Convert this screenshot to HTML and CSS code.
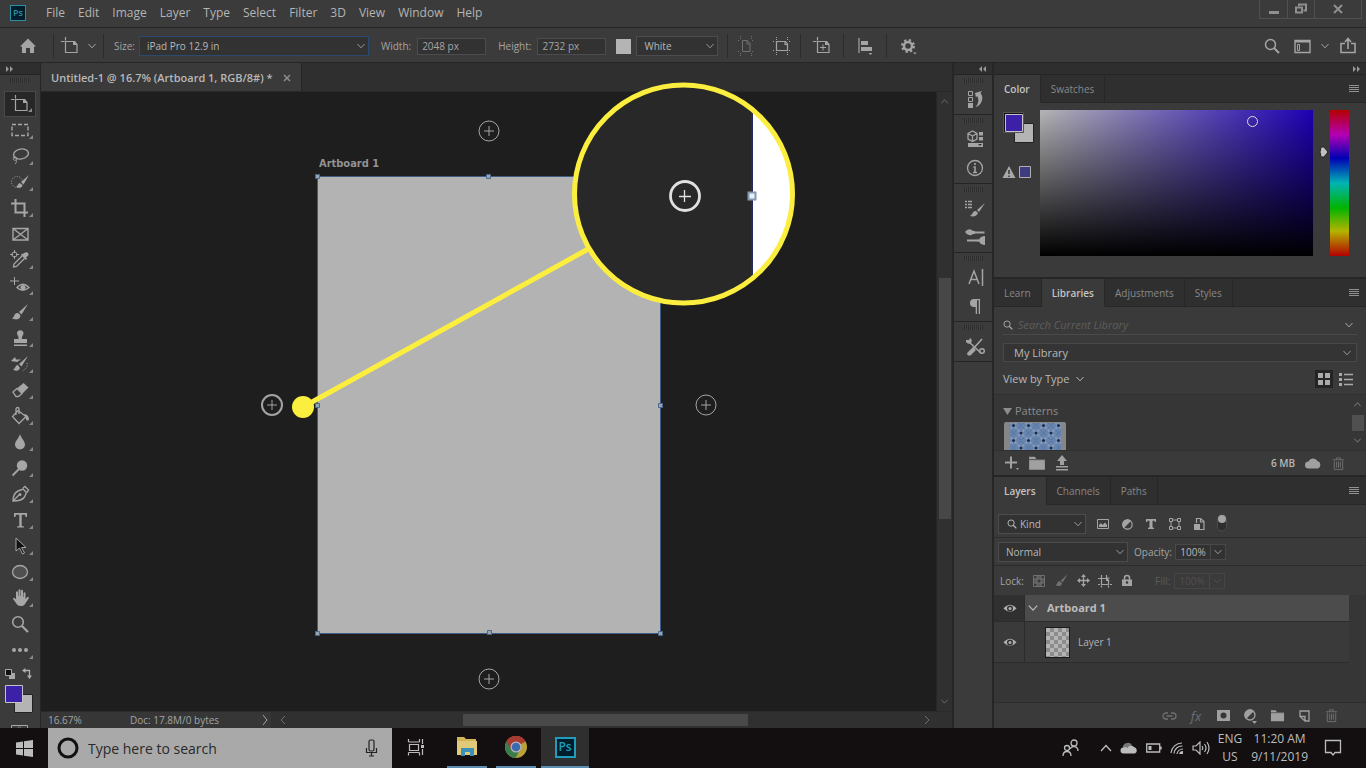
FILE: index.html
```html
<!DOCTYPE html>
<html lang="en">
<head>
<meta charset="utf-8">
<title>Untitled-1 - Photoshop</title>
<link rel="stylesheet" href="styles.css">
</head>
<body>
<svg class="defs" width="0" height="0" aria-hidden="true">
  <symbol id="chev" viewBox="0 0 10 10"><path d="M1.500 3l3.500 3.800L8.500 3" fill="none" stroke="currentColor"/></symbol>
  <symbol id="artb" viewBox="0 0 20 20"><path d="M5.500 5.500h9l2.500 3v8h-11.500zM1 5.500h3.500M5.500 1v3.500" fill="none" stroke="currentColor" stroke-width="1.200"/><path d="M13 5h2l2.500 4H13z" fill="currentColor"/></symbol>
  <symbol id="search" viewBox="0 0 16 16"><circle cx="6.500" cy="6.500" r="5" fill="none" stroke="currentColor" stroke-width="1.500"/><path d="M10 10l5 5" stroke="currentColor" stroke-width="2"/></symbol>
  <symbol id="menu" viewBox="0 0 12 10"><path d="M1 1.500h10M1 3.500h10M1 5.500h10M1 7.500h10" stroke="currentColor"/></symbol>
  <symbol id="brush" viewBox="0 0 20 20"><path d="M18 2L9 10l2.500 2.500zM8 11c-2-.5-3.500 1-4 3-.4 1.500-1.500 2-2.500 2 3 2 7 2 8.500-.5.500-1 .6-2-.2-3z" fill="currentColor"/></symbol>
  <symbol id="folder" viewBox="0 0 16 16"><path d="M1 2.500h5l1.500 2H15v9.500H1z" fill="currentColor"/><path d="M1 5h14" stroke="#383838" stroke-width=".7"/></symbol>
  <symbol id="trash" viewBox="0 0 16 16"><path d="M3.500 5v9.500h9V5M2 4h12M6 4V2h4v2M6 6v6.500M8 6v6.500M10 6v6.500" fill="none" stroke="currentColor"/></symbol>
  <symbol id="half" viewBox="0 0 14 14"><circle cx="7" cy="7" r="5" fill="none" stroke="currentColor" stroke-width="1.300"/><path d="M11 3A5.500 5.500 0 0 0 3 11z" fill="currentColor"/></symbol>
  <symbol id="eye" viewBox="0 0 16 12"><path d="M1.500 6.500Q8-1 14.500 6.500 8 13 1.500 6.500z" fill="currentColor"/><circle cx="8" cy="6.500" r="3" fill="#333"/><circle cx="8" cy="6.500" r="1.500" fill="currentColor"/></symbol>
  <symbol id="cloud" viewBox="0 0 18 12"><path d="M4.500 11.500a3.500 3.500 0 0 1 0-7 5 5 0 0 1 9-.5 4 4 0 0 1 .5 7.500z" fill="currentColor"/></symbol>
  <symbol id="plus" viewBox="0 0 22 22"><circle cx="11" cy="11" r="10" fill="none" stroke="currentColor"/><path d="M6 11h10M11 6v10" stroke="currentColor" stroke-width="1"/></symbol>
</svg>

<header class="menubar">
  <span class="ps small">Ps</span>
  <nav class="menus">
    <button>File</button><button>Edit</button><button>Image</button><button>Layer</button><button>Type</button><button>Select</button><button>Filter</button><button>3D</button><button>View</button><button>Window</button><button>Help</button>
  </nav>
  <div class="winctl">
    <button aria-label="Minimize"><svg width="12" height="12"><path d="M1 9.500h10" stroke="currentColor" stroke-width="3"/></svg></button>
    <button aria-label="Restore"><svg width="14" height="12"><path d="M5 3V1.500h7v6H9.500M2 4.500h6v5H2z" fill="none" stroke="currentColor" stroke-width="2"/></svg></button>
    <button class="wide" aria-label="Close"><svg width="12" height="12"><path d="M2 2l8 8M10 2l-8 8" stroke="currentColor" stroke-width="2"/></svg></button>
  </div>
</header>

<section class="options" aria-label="Tool options">
  <button class="opt home" aria-label="Home"><svg width="18" height="18" viewBox="0 0 18 18"><path d="M9 1.500L1 9.500h2V16h4v-5h4v5h4V9.500h2z" fill="currentColor"/></svg></button>
  <i class="sep"></i>
  <button class="opt tool" aria-label="Artboard tool"><svg width="20" height="20"><use href="#artb"/></svg><svg width="10" height="10"><use href="#chev"/></svg></button>
  <i class="sep"></i>
  <label class="lab first" for="size">Size:</label>
  <span class="sel size"><select id="size"><option>iPad Pro 12.9 in</option></select><svg width="10" height="10"><use href="#chev"/></svg></span>
  <label class="lab" for="w">Width:</label><input id="w" class="num" value="2048 px">
  <label class="lab" for="h">Height:</label><input id="h" class="num" value="2732 px">
  <button class="colorchip" aria-label="Artboard color"></button>
  <span class="sel bg"><select aria-label="Background"><option>White</option></select><svg width="10" height="10"><use href="#chev"/></svg></span>
  <i class="sep"></i>
  <button class="opt w36 dim" aria-label="Portrait"><svg width="20" height="20" viewBox="0 0 20 20"><path d="M6.500 4.500h5l2.500 3v8H6.500zM11 5v3h3" fill="none" stroke="currentColor"/><path d="M4.500 0v3M15.500 0v3M2 4.500h2M16 4.500h2M2 15.500h2M16 15.500h2M4.500 17v3M15.500 17v3" stroke="currentColor" stroke-dasharray="1 1"/></svg></button>
  <button class="opt w36" aria-label="Landscape"><svg width="20" height="20" viewBox="0 0 20 20"><path d="M4.500 5.500h9l2 2.500v6.500h-11zM13 6v2.500h3" fill="none" stroke="currentColor" stroke-width="1.200"/><path d="M4.500 1v3M15.500 1v3M1 5.500h2M17 5.500h2M1 14.500h2M17 14.500h2M4.500 16v3M15.500 16v3" stroke="currentColor" stroke-dasharray="1 1"/></svg></button>
  <i class="sep"></i>
  <button class="opt w42" aria-label="Add artboard"><svg width="20" height="20"><use href="#artb"/><path d="M8 11.500h6M11 8.500v6" stroke="currentColor"/></svg></button>
  <i class="sep"></i>
  <button class="opt w42" aria-label="Align"><svg width="18" height="18"><path d="M3 1v15" stroke="currentColor" stroke-width="1.200"/><path d="M5 4h7v4H5zM5 10h11v4H5zM12.500 16h4L14.500 18z" fill="currentColor"/></svg></button>
  <i class="sep"></i>
  <button class="opt w42" aria-label="Settings"><svg width="18" height="18"><circle cx="9" cy="9" r="4" fill="none" stroke="currentColor" stroke-width="2.500"/><circle cx="9" cy="9" r="5.800" fill="none" stroke="currentColor" stroke-width="2.400" stroke-dasharray="2.280 2.280"/><path d="M14 15.500h3.500L16 17.500z" fill="currentColor"/></svg></button>
  <div class="optright">
    <button class="find" aria-label="Search"><svg width="16" height="16"><use href="#search"/></svg></button>
    <button aria-label="Workspace"><svg width="17" height="15"><path d="M1 1.500h15v12H1z" fill="none" stroke="currentColor" stroke-width="1.400"/><path d="M1 2.500h15" stroke="currentColor" stroke-width="2"/><path d="M3.500 5.500h2v6h-2z" fill="none" stroke="currentColor"/></svg></button>
    <button aria-label="Workspace menu"><svg width="10" height="10"><use href="#chev"/></svg></button>
    <button aria-label="Share"><svg width="18" height="18"><path d="M6 6.500H2v9h14v-9h-4M9 12V3M6 5l3-3.500L12 5" fill="none" stroke="currentColor" stroke-width="1.600"/></svg></button>
  </div>
</section>

<main class="workspace">
  <aside class="toolbar">
    <div class="colhead"><svg width="9" height="8"><path d="M1 1l3 3-3 3zM5 1l3 3-3 3z" fill="currentColor"/></svg></div>
    <div class="griprow"><i class="grip"></i></div>
    <div class="tools">
      <button class="on more" aria-label="Artboard"><svg><use href="#artb"/></svg></button>
      <button class="more" aria-label="Marquee"><svg><path d="M2 4.500h16v11H2z" fill="none" stroke="currentColor" stroke-width="1.400" stroke-dasharray="4 2"/></svg></button>
      <button class="more" aria-label="Lasso"><svg><ellipse cx="11" cy="8" rx="7.500" ry="5" fill="none" stroke="currentColor" stroke-width="1.400" transform="rotate(-10 11 8)"/><path d="M4 11c-2 2 0 4 2 3s0-4-2-3M6 14c1 2 0 3-1 4" fill="none" stroke="currentColor"/></svg></button>
      <button class="more" aria-label="Quick selection"><svg><circle cx="7" cy="10" r="5.500" fill="none" stroke="currentColor" stroke-dasharray="1 1.500"/><path d="M19 3l-8 7 2.500 2.500zM10 11c-2 0-2 3-4 4 3 1.500 6 1 6.500-1.500z" fill="currentColor"/></svg></button>
      <button class="more" aria-label="Crop"><svg><path d="M5.500 1v13.500H18M1 5.500h13.500V19" fill="none" stroke="currentColor" stroke-width="2"/></svg></button>
      <button aria-label="Frame"><svg><path d="M3 4.500h15v11.500H3zM3 4.500L18 16M18 4.500L3 16" fill="none" stroke="currentColor" stroke-width="1.400"/></svg></button>
      <button class="more" aria-label="Eyedropper"><svg><circle cx="4.500" cy="4.500" r="2.500" fill="none" stroke="currentColor"/><path d="M4.500 0v3M4.500 6v3M0 4.500h3M6 4.500h3" stroke="currentColor"/><path d="M12 6l-8 8-.5 3 3-.5 8-8" fill="none" stroke="currentColor" stroke-width="1.300"/><path d="M11 5l5 5 1-1.500-1-1c3-2 3-3 2-4.500s-3-1-5 1l-1-.5z" fill="currentColor"/></svg></button>
      <button class="more" aria-label="Red eye"><svg><path d="M4.500 1v8M0 5h9" stroke="currentColor"/><path d="M7 11.500Q12.500 5 19 11.500 12.500 17 7 11.500z" fill="none" stroke="currentColor" stroke-width="1.400"/><circle cx="13" cy="11.500" r="2.600" fill="currentColor"/></svg></button>
      <button class="more" aria-label="Brush"><svg><use href="#brush"/></svg></button>
      <button class="more" aria-label="Stamp"><svg><path d="M8.500 11c.5-3-1.500-3.500-1.500-6a3.300 3.300 0 0 1 6.500 0c0 2.500-2 3-1.500 6h5v4H4v-4zM4 16.500h13V18H4z" fill="currentColor"/></svg></button>
      <button class="more" aria-label="History brush"><svg><path d="M18 2L9 10l2.500 2.500zM8 11c-3 0-2 3-5 4.500 3 2 6 1.500 7-1.500zM1 7l4-4 1 2.500h5L7 8z" fill="currentColor"/><path d="M17 9c1 4-2 7-5 8" fill="none" stroke="currentColor" stroke-dasharray="1 1.500"/></svg></button>
      <button class="more" aria-label="Eraser"><svg><path d="M3 12l4-3.500 5 5-3.500 3H6z" fill="none" stroke="currentColor" stroke-width="1.300"/><path d="M7.500 8l6-5 5 4.500-6 6z" fill="currentColor"/></svg></button>
      <button class="more" aria-label="Paint bucket"><svg><path d="M8 4.500l8 6-7 7-6.500-7zM6 9V3c0-2 3-2 3 0v5" fill="none" stroke="currentColor" stroke-width="1.300"/><path d="M14 8c3 0 5 3 5 5s-3 2-3 0c0-1.500-1-3-2-5z" fill="currentColor"/></svg></button>
      <button class="more" aria-label="Blur"><svg><path d="M10 2c1 4 5 7 5 10.500a5 5 0 0 1-10 0C5 9 9 6 10 2z" fill="currentColor"/></svg></button>
      <button class="more" aria-label="Dodge"><svg><circle cx="12" cy="7.500" r="5.200" fill="currentColor"/><path d="M9 11l-6.500 6.500" stroke="currentColor" stroke-width="1.800"/></svg></button>
      <button class="more" aria-label="Pen"><svg><path d="M3 17c0-5 1-8 5-10l5-2 3.500 3.500-2 4.500c-2 3-6 4-11.500 4zM3 17l6-6M13 4l2-1.500L18.500 6 17 8.500" fill="none" stroke="currentColor" stroke-width="1.400"/><circle cx="10" cy="10.500" r="1.500" fill="currentColor"/></svg></button>
      <button class="more" aria-label="Type"><svg><path d="M4 3h13v4h-1.300l-.7-2.300h-3.300V16l2.300.5v1H7v-1l2.300-.5V4.700H6L5.300 7H4z" fill="currentColor"/></svg></button>
      <button class="more" aria-label="Path selection"><svg><path d="M6 2v13l3.500-3 3 6 2-1-3-5.500h4.500z" fill="#111" stroke="currentColor"/></svg></button>
      <button class="more" aria-label="Ellipse"><svg><ellipse cx="10" cy="10" rx="7.500" ry="6.500" fill="#505050" stroke="currentColor" stroke-width="1.300"/></svg></button>
      <button class="more" aria-label="Hand"><svg><path d="M6 11V4q1-1.500 2 0v4h.5V2q1-1.500 2 0v6h.5V2.500q1-1.500 2 0V9h.5V5q1-1.500 2 0v6l2-2q1.500-.5 1.500 1l-4 6c-1 1.500-2 2-4 2-3 0-4-1-5-3l-3-4q.5-2 2-.5z" fill="currentColor"/></svg></button>
      <button aria-label="Zoom"><svg><circle cx="8" cy="8" r="5.300" fill="none" stroke="currentColor" stroke-width="1.600"/><path d="M12 12l6 6" stroke="currentColor" stroke-width="2.200"/></svg></button>
      <button class="more" aria-label="Edit toolbar"><svg><circle cx="4" cy="10" r="2" fill="currentColor"/><circle cx="10" cy="10" r="2" fill="currentColor"/><circle cx="16" cy="10" r="2" fill="currentColor"/></svg></button>
    </div>
    <svg class="swatches" width="40" height="66" viewBox="0 0 40 66"><path d="M9 10h6v6H9z" fill="#a8a8a8"/><path d="M5.500 6.500h6v6h-6z" fill="#111" stroke="#a8a8a8"/><path d="M25 7.500h4.500V13" fill="none" stroke="#b0b0b0" stroke-width="1.300"/><path d="M22 7.500L25.500 5v5zM27 12.500h5l-2.500 3.500z" fill="#b0b0b0"/><path d="M14.500 31.500h18v18h-18z" fill="#b4b4b4" stroke="#222"/><path d="M5.500 22.500h17v17h-17z" fill="#3c21a8" stroke="#c4c4c4"/><path d="M11.500 62.500h16v9h-16z" fill="none" stroke="#a8a8a8"/><circle cx="19.500" cy="67" r="3" fill="none" stroke="#a8a8a8" stroke-dasharray="1 1"/></svg>
  </aside>

  <section class="doc">
    <div class="doctabs"><div class="doctab"><span>Untitled-1 @ 16.7% (Artboard 1, RGB/8#) *</span><button aria-label="Close tab"><svg width="8" height="8"><path d="M1 1l6 6M7 1L1 7" stroke="currentColor" stroke-width="1.600"/></svg></button></div></div>
    <div class="canvasrow">
      <div class="canvas">
        <span class="abname">Artboard 1</span>
        <svg class="artboard" width="351" height="466">
          <path d="M4.500 4.500h343v457H4.500z" fill="#b3b3b3" stroke="#3f5c84"/>
          <g fill="#93a6b8" stroke="#4d6a8d"><path d="M2.500 2.500h4v4h-4zM173.500 2.500h4v4h-4zM2.500 231.500h4v4h-4zM345.500 231.500h4v4h-4zM2.500 459.500h4v4h-4zM174.500 458.500h4v4h-4zM345.500 459.500h4v4h-4z"/></g>
        </svg>
        <svg class="add top"><use href="#plus"/></svg>
        <svg class="add right"><use href="#plus"/></svg>
        <svg class="add bottom"><use href="#plus"/></svg>
        <svg class="add left"><use href="#plus"/></svg>
      </div>
      <div class="vscroll"><svg width="9" height="9" viewBox="0 0 10 10"><path d="M1.500 7L5 3l3.500 4" fill="none" stroke="currentColor"/></svg><div class="vtrack"><i></i></div><svg width="9" height="9"><use href="#chev"/></svg></div>
    </div>
    <footer class="status">
      <span class="zoomv">16.67%</span><span class="docsize">Doc: 17.8M/0 bytes</span>
      <svg width="8" height="12"><path d="M2 1l4 5-4 5" fill="none" stroke="currentColor"/></svg>
      <div class="hscroll"><svg width="8" height="8"><path d="M6 0L2 4l4 4" fill="none" stroke="currentColor"/></svg><div class="htrack"><i></i></div><svg width="8" height="8"><path d="M2 0l4 4-4 4" fill="none" stroke="currentColor"/></svg></div>
    </footer>
    <svg class="callout" width="505" height="340" viewBox="290 80 505 340">
      <defs><clipPath id="lens"><circle cx="684" cy="194" r="109"/></clipPath></defs>
      <path d="M303 407L590 248" stroke="#fbee3e" stroke-width="5"/><circle cx="303" cy="407" r="11" fill="#fbee3e"/>
      <circle cx="684" cy="194" r="109" fill="#282828"/>
      <g clip-path="url(#lens)"><path d="M752 80h45v230h-45z" fill="#fff"/><path d="M752 80v230" stroke="#272a60" stroke-width="2"/></g>
      <path d="M748.500 192.500h7v7h-7z" fill="#e5f0fa" stroke="#8498b0" stroke-width="2"/>
      <circle cx="685" cy="196" r="14.500" fill="none" stroke="#e0e0e0" stroke-width="2.800"/><path d="M679 196.500h12M684.500 190v12" stroke="#e0e0e0" stroke-width="1.300"/>
      <circle cx="683.500" cy="194" r="109" fill="none" stroke="#fbee3e" stroke-width="5"/>
    </svg>
  </section>

  <aside class="dock">
    <div class="colhead end"><svg width="9" height="8"><path d="M4 1L1 4l3 3zM8 1L5 4l3 3z" fill="currentColor"/></svg></div>
    <div class="dgroup"><i class="grip"></i><button aria-label="History"><svg><path d="M3.500 1.500h4v4h-4zM3.500 7.500h4v4h-4z" fill="none" stroke="currentColor"/><path d="M3 13h5v5H3zM10 3l7-2-1.500 2c4 5 1 12-5 14.500 3-4 4-8 1.500-11.500l-1 1.500z" fill="currentColor"/></svg></button></div>
    <div class="dgroup"><i class="grip"></i><button aria-label="3D"><svg><path d="M3 3.500L7.500 1 12 3.500v5.500l-4.500 2.500L3 9zM3 3.500L7.500 6 12 3.500M7.500 6v5.500" fill="none" stroke="currentColor" stroke-width="1.300"/><path d="M14 2h4v3.500h-4zM14 7h4v3.500h-4zM3 13h15v4H3z" fill="currentColor"/><path d="M13 14l2 2 2-2z" fill="#333"/></svg></button><button aria-label="Info"><svg><circle cx="10" cy="9" r="7.500" fill="none" stroke="currentColor" stroke-width="1.300"/><path d="M8.500 8H10v5M8 13.500h4M10 4v2" fill="none" stroke="currentColor" stroke-width="1.600"/></svg></button></div>
    <div class="dgroup"><i class="grip"></i><button aria-label="Brush settings"><svg><path d="M0 2.500h2M3 2.500h4M0 5.500h2M3 5.500h4M0 8.500h2M3 8.500h4" stroke="currentColor" stroke-width="1.500"/><path d="M20 4l-8 7 2 2zM11 12c-3-.5-3 3-6 5 4 1 7 0 8-3z" fill="currentColor"/></svg></button><button aria-label="Brushes"><svg><path d="M0 4c3-4 6-3 8-1h2v3H8c-2 2-5 2-8-2zM20 8v9c-3 0-5-1.500-6-3.500h-2v-2h2c1-2 3-3.500 6-3.500z" fill="currentColor"/><path d="M10 4.500h9.500M2 12.500h11" stroke="currentColor" stroke-width="1.800"/></svg></button></div>
    <div class="dgroup"><i class="grip"></i><button aria-label="Character"><svg><path d="M4 16L9 3l5 13M6 11.500h6M17.500 1v17" fill="none" stroke="currentColor" stroke-width="1.500"/></svg></button><button aria-label="Paragraph"><svg><path d="M9 2h6v15h-1.300V3.300H12V17h-1.300v-7H9a4 4 0 0 1 0-8z" fill="currentColor"/></svg></button></div>
    <div class="dgroup"><i class="grip"></i><button aria-label="Tool presets"><svg><path d="M3 4l13 12M17 2L8 12" stroke="currentColor" stroke-width="1.600"/><path d="M1 3h3l1-2q3 2 1 5-3 2-5-1zM8 10l3 3-5 5c-3 2-5-1-3-3z" fill="currentColor"/><circle cx="17" cy="14" r="2.300" fill="none" stroke="currentColor" stroke-width="1.500"/></svg></button></div>
  </aside>

  <aside class="panels">
    <div class="colhead end"><svg width="9" height="8"><path d="M1 1l3 3-3 3zM5 1l3 3-3 3z" fill="currentColor"/></svg></div>
    <section class="panel">
      <div class="tabs"><button class="on">Color</button><button>Swatches</button><button class="pmenu" aria-label="Panel menu"><svg width="12" height="10"><use href="#menu"/></svg></button></div>
      <div class="colorbody">
        <svg class="cs" width="36" height="76"><path d="M10.500 13.500h19v19h-19z" fill="#b4b4b4" stroke="#222"/><path d="M-.5 2.500h20v20h-20z" fill="#111" stroke="#555"/><path d="M1.500 4.500h17v17h-17z" fill="#3c21a8" stroke="#c4c4c4"/><path d="M5 56l6.500 12h-13z" fill="#a8a8a8"/><path d="M5 60v4M5 65.500v1.500" stroke="#333" stroke-width="1.500"/><path d="M15.500 56.500h11v11h-11z" fill="#403c80" stroke="#b0b0b0"/></svg>
        <div class="field"><i></i></div>
        <svg class="huemark" width="17" height="146"><path d="M8 37h3l4 5-4 5H8q-2-5 0-10z" fill="#c0c0c0" stroke="#222"/></svg>
        <div class="hue"></div>
      </div>
    </section>
    <section class="panel">
      <div class="tabs"><button>Learn</button><button class="on">Libraries</button><button>Adjustments</button><button>Styles</button><button class="pmenu" aria-label="Panel menu"><svg width="12" height="10"><use href="#menu"/></svg></button></div>
      <div class="libtop">
        <div class="libsearch"><svg width="10" height="10"><use href="#search"/></svg><input aria-label="Search library" placeholder="Search Current Library"><svg width="10" height="10"><use href="#chev"/></svg></div>
        <span class="sel lib"><select aria-label="Library"><option>My Library</option></select><svg width="10" height="10"><use href="#chev"/></svg></span>
        <div class="viewrow"><button class="vbt">View by Type <svg width="10" height="10"><use href="#chev"/></svg></button>
          <button class="grid on" aria-label="Grid view"><svg width="14" height="14"><path d="M1 1h5v5H1zM8 1h5v5H8zM1 8h5v5H1zM8 8h5v5H8z" fill="currentColor"/></svg></button>
          <button class="grid" aria-label="List view"><svg width="14" height="14"><path d="M0 1h3v3H0zM0 6h3v3H0zM0 11h3v3H0z" fill="currentColor"/><path d="M5 2.500h9M5 7.500h9M5 12.500h9" stroke="currentColor" stroke-width="1.500"/></svg></button></div>
      </div>
      <div class="patterns">
        <div class="plist"><div class="ptitle"><svg width="9" height="8"><path d="M0 1h9L4.500 8z" fill="currentColor"/></svg>Patterns</div>
          <svg class="thumb" width="62" height="28"><defs><pattern id="tile" width="15" height="15" patternUnits="userSpaceOnUse" x="2" y="-4"><rect width="15" height="15" fill="#6785ae"/><path d="M0 0l15 15M15 0L0 15" stroke="#8198ba" stroke-width="2"/><path d="M0 7.500L7.500 0 15 7.500 7.500 15z" fill="none" stroke="#55749f"/><circle cx="7.500" cy="7.500" r="1.500" fill="#1d2940"/><circle cx="0" cy="0" r="1.500" fill="#1d2940"/><circle cx="15" cy="15" r="1.500" fill="#1d2940"/><circle cx="0" cy="15" r="1.500" fill="#1d2940"/><circle cx="15" cy="0" r="1.500" fill="#1d2940"/></pattern></defs><rect width="62" height="34" rx="2" fill="#868686"/><path d="M5 1h52v27H5z" fill="url(#tile)"/></svg></div>
        <div class="pscroll"><svg width="9" height="9" viewBox="0 0 10 10"><path d="M1.500 7L5 3l3.500 4" fill="none" stroke="currentColor"/></svg><i></i><svg width="9" height="9"><use href="#chev"/></svg></div>
      </div>
      <div class="libfoot">
        <button aria-label="Add"><svg width="15" height="16"><path d="M1 7.500h12M7 1.500v12" stroke="currentColor" stroke-width="2"/><path d="M12 13h3l-1.500 2z" fill="currentColor"/></svg></button>
        <button aria-label="New group"><svg width="18" height="18"><use href="#folder"/></svg></button>
        <button aria-label="Upload"><svg width="14" height="16"><path d="M7 0l5 6H9v4H5V6H2zM1 11h12v1.500H1zM1 14h12v1.500H1z" fill="currentColor"/></svg></button>
        <span class="mb">6 MB</span><svg width="18" height="12"><use href="#cloud"/></svg><button class="dim" aria-label="Delete"><svg width="15" height="15"><use href="#trash"/></svg></button>
      </div>
    </section>
    <section class="panel layers">
      <div class="tabs"><button class="on">Layers</button><button>Channels</button><button>Paths</button><button class="pmenu" aria-label="Panel menu"><svg width="12" height="10"><use href="#menu"/></svg></button></div>
      <div class="lrow filter">
        <span class="sel kind"><svg class="lead" width="10" height="10"><use href="#search"/></svg><select aria-label="Filter kind"><option>Kind</option></select><svg width="10" height="10"><use href="#chev"/></svg></span>
        <button aria-label="Pixel layers"><svg width="12" height="10"><path d="M.5.500h11v9H.5z" fill="none" stroke="currentColor"/><path d="M2 8V6l2-2 1.500 2L8 3.500 10 6v2z" fill="currentColor"/></svg></button>
        <button aria-label="Adjustment layers"><svg width="13" height="13"><use href="#half"/></svg></button>
        <button aria-label="Type layers"><svg width="10" height="10"><path d="M0 0h10v3H9L8.500 1.800h-2v6.400L8 9v1H2V9l1.500-.8V1.800h-2L1 3H0z" fill="currentColor"/></svg></button>
        <button aria-label="Shape layers"><svg width="12" height="12"><path d="M2 2h8v8H2z" fill="none" stroke="currentColor"/><path d="M.5.500h3v3h-3zM8.500.500h3v3h-3zM.5 8.500h3v3h-3zM8.500 8.500h3v3h-3z" fill="#3a3a3a" stroke="currentColor"/></svg></button>
        <button aria-label="Smart objects"><svg width="11" height="13"><path d="M2.500 5V.5h4l3.500 3v8H6M6.500 1v3H10" fill="none" stroke="currentColor" stroke-width="1.200"/><path d="M0 6h6v6H0z" fill="currentColor"/></svg></button>
        <button class="toggle" aria-label="Filter toggle"><svg width="10" height="18"><rect x=".5" y="1" width="9" height="16" rx="4.500" fill="#2e2e2e" stroke="#4c4c4c"/><circle cx="5" cy="5" r="4" fill="currentColor"/></svg></button>
      </div>
      <div class="lrow blend">
        <span class="sel mode"><select aria-label="Blend mode"><option>Normal</option></select><svg width="10" height="10"><use href="#chev"/></svg></span>
        <label for="op">Opacity:</label><span class="pct"><input id="op" value="100%"><button aria-label="Opacity slider"><svg width="10" height="10"><use href="#chev"/></svg></button></span>
      </div>
      <div class="lrow lock">
        <span class="lk">Lock:</span>
        <button class="dim" aria-label="Lock transparency"><svg width="12" height="12"><path d="M.5.500h11v11H.5zM4 1v10M8 1v10M1 4h10M1 8h10" fill="none" stroke="currentColor"/><path d="M4 1h4v3H4zM1 4h3v4H1zM8 4h3v4H8zM4 8h4v3H4z" fill="currentColor" opacity=".6"/></svg></button>
        <button class="dim" aria-label="Lock pixels"><svg width="15" height="15"><use href="#brush"/></svg></button>
        <button aria-label="Lock position"><svg width="13" height="13"><path d="M6.500 2v9M2 6.500h9" stroke="currentColor" stroke-width="1.300"/><path d="M6.500 0L9 3H4zM6.500 13L9 10H4zM0 6.500L3 4v5zM13 6.500L10 4v5z" fill="currentColor"/></svg></button>
        <button aria-label="Lock artboard"><svg width="14" height="14"><path d="M3.500 4.500h5l2 2v4h-7zM3.500 1v3M0 4.500h3M0 10.500h2M3.500 11.500v2M10.500 11.500v2M12 10.500h2M8.500 1v3l3 0" fill="none" stroke="currentColor" stroke-width="1.200"/><path d="M8 4h1.500l2 3H8z" fill="currentColor"/></svg></button>
        <button aria-label="Lock all"><svg width="12" height="13"><path d="M1 5.500h10V12H1z" fill="currentColor"/><path d="M3.500 6V4q0-2.500 2.500-2.500T8.500 4v2" fill="none" stroke="currentColor" stroke-width="1.500"/><circle cx="6" cy="8.500" r="1.200" fill="#333"/></svg></button>
        <label class="off" for="fill">Fill:</label><span class="pct off"><input id="fill" value="100%" disabled><button disabled aria-label="Fill slider"><svg width="10" height="10"><use href="#chev"/></svg></button></span>
      </div>
      <div class="llist">
        <div class="layer sel-on"><button class="eye" aria-label="Toggle artboard visibility"><svg width="16" height="12"><use href="#eye"/></svg></button><div class="lbody"><svg width="12" height="12"><use href="#chev"/></svg><b>Artboard 1</b></div></div>
        <div class="layer tall"><button class="eye" aria-label="Toggle layer visibility"><svg width="16" height="12"><use href="#eye"/></svg></button><div class="lbody"><i class="lthumb"></i><span>Layer 1</span></div></div>
      </div>
      <div class="lfoot">
        <button class="dim" aria-label="Link"><svg width="15" height="10"><path d="M6 2H4a3 3 0 0 0 0 6h2M9 2h2a3 3 0 0 1 0 6H9M4.500 5h6" fill="none" stroke="currentColor" stroke-width="1.300"/></svg></button>
        <button class="fx dim" aria-label="Effects">fx</button>
        <button aria-label="Mask"><svg width="13" height="11"><path d="M0 0h13v11H0z" fill="currentColor"/><circle cx="6.500" cy="5.500" r="3" fill="#383838"/></svg></button>
        <button aria-label="Adjustment"><svg width="14" height="16"><use href="#half" width="14" height="14"/><path d="M9 13h5l-2.500 3z" fill="currentColor"/></svg></button>
        <button aria-label="Group"><svg width="15" height="15"><use href="#folder"/></svg></button>
        <button aria-label="New layer"><svg width="11" height="12"><path d="M1 1h9v10H6L1 6.500zM1 6.500h5V11" fill="none" stroke="currentColor" stroke-width="1.300"/></svg></button>
        <button class="dim" aria-label="Delete layer"><svg width="15" height="15"><use href="#trash"/></svg></button>
      </div>
    </section>
  </aside>
</main>

<footer class="taskbar">
  <button class="start" aria-label="Start"><svg width="17" height="17" viewBox="0 0 17 17"><path d="M0 2.500l7-1v6.500H0zM8 1.300L17 0v8H8zM0 9h7v6.500l-7-1zM8 9h9v8l-9-1.300z" fill="#bcbcbc"/></svg></button>
  <label class="tsearch"><svg width="22" height="22"><circle cx="11" cy="11" r="9" fill="none" stroke="#111" stroke-width="3"/></svg><input placeholder="Type here to search" aria-label="Search"><svg width="13" height="18"><rect x="4" y="1" width="5" height="11" rx="1.500" fill="none" stroke="#222" stroke-width="1.200"/><path d="M1.500 9v4.500h10V9M6.500 14v3M4 17h5" fill="none" stroke="#222" stroke-width="1.200"/></svg></label>
  <button class="app" aria-label="Task view"><svg width="18" height="18"><path d="M1.500 1v3M12.500 1v3M1.500 4h11M2.500 6.500h9v6h-9zM1.500 14.500h11M1.500 14.500v3M12.500 14.500v3M15.500 1v5M15.500 11v6" fill="none" stroke="#bbb" stroke-width="1.200"/><path d="M14 7h3v3h-3z" fill="#bbb"/></svg></button>
  <button class="app run" aria-label="File Explorer"><svg width="24" height="24"><path d="M2 2h7l2 2h10v16H2z" fill="#d3b458"/><path d="M2 6h20v14H2z" fill="#e0ca7a"/><path d="M6 21v-8h13v8h-4v-4h-5v4z" fill="#3a91b8"/></svg></button>
  <button class="app run" aria-label="Chrome"><svg width="24" height="24" viewBox="0 0 24 24"><circle cx="12" cy="12" r="11" fill="#b9a13a"/><path d="M12 12L2.500 6.500A11 11 0 0 1 21.500 6.500z" fill="#a93a31"/><path d="M12 12L2.500 6.500A11 11 0 0 0 11.500 23L16.500 14z" fill="#3a7d4c"/><path d="M12 6.500h9.500A11 11 0 0 0 2.500 6.500L7 14z" fill="#a93a31"/><circle cx="12" cy="12" r="5.500" fill="#b8b8b8"/><circle cx="12" cy="12" r="4.300" fill="#3d69b0"/></svg></button>
  <button class="app run cur" aria-label="Photoshop"><span class="ps">Ps</span></button>
  <div class="tray">
    <svg width="18" height="18"><circle cx="12" cy="4" r="3" fill="none" stroke="currentColor" stroke-width="1.300"/><circle cx="5" cy="9" r="2.500" fill="none" stroke="currentColor" stroke-width="1.300"/><path d="M1 17c0-6 8-6 8 0M8 10c2-4 8-3 8 2" fill="none" stroke="currentColor" stroke-width="1.300"/></svg>
    <svg class="gap" width="12" height="10"><path d="M1 8l5-5.500L11 8" fill="none" stroke="currentColor" stroke-width="1.300"/></svg>
    <svg width="18" height="12"><path d="M3 7a5 5 0 0 1 9-4l-5 6z" fill="#777"/><path d="M3.500 11.500a3 3 0 0 1 0-6q2-1 4 .5a4 4 0 0 1 6.500-1 3.500 3.500 0 0 1 1 6.500z" fill="currentColor"/></svg>
    <svg width="16" height="12"><path d="M.700 2h13v8H.700zM15 4.500v3" fill="none" stroke="currentColor" stroke-width="1.300"/><path d="M2.500 4h3v4h-3z" fill="currentColor"/></svg>
    <svg width="14" height="14"><path d="M1 12A11 11 0 0 1 12 2M4 12.500A8 8 0 0 1 12.500 5M7 13A6 6 0 0 1 13 8" fill="none" stroke="currentColor" stroke-width="1.200"/><path d="M9 13a4 4 0 0 1 4-3v3z" fill="currentColor"/></svg>
    <svg width="18" height="14"><path d="M1 5h3l4-4v12L4 9H1z" fill="none" stroke="currentColor" stroke-width="1.200"/><path d="M10 5q1.500 2 0 4M12.500 3q3 4 0 8M15 1q4 6 0 12" fill="none" stroke="currentColor" stroke-width="1.200"/></svg>
    <div class="lang"><span>ENG</span><span>US</span></div>
    <div class="clock"><span>11:20 AM</span><span>9/11/2019</span></div>
    <svg width="18" height="18"><path d="M1.500 1.500h15v12H11l-2 2.500-2-2.500H1.500z" fill="none" stroke="currentColor" stroke-width="1.300"/></svg>
  </div>
</footer>
</body>
</html>
```
FILE: styles.css
```css
* { box-sizing: border-box; }
body {
  margin: 0; height: 100vh; display: flex; flex-direction: column; overflow: hidden;
  background: #3a3a3a; color: #b4b4b4;
  font: 10px/14px "Open Sans", "Noto Sans", sans-serif;
}
button, input, select { font: inherit; color: inherit; background: none; border: 0; padding: 0; margin: 0; border-radius: 0; outline: 0; }
select { appearance: none; width: 100%; height: 100%; }
button { display: inline-flex; align-items: center; justify-content: center; }
svg { display: block; flex: none; }
.defs { position: absolute; }

.ps { display: flex; align-items: center; justify-content: center; width: 21px; height: 21px; border: 2px solid #1f9dbd; background: #001d2c; color: #1f9dbd; font-size: 12px; font-weight: 600; }
.ps.small { width: 16px; height: 16px; margin-top: 5px; border-width: 1px; border-color: #2a8fa5; color: #2a8fa5; font-size: 9px; }

.menubar { display: flex; height: 28px; flex: none; align-items: flex-start; padding-left: 10px; border-bottom: 1px solid #262626; background: #3b3b3b; }
.menus { display: flex; gap: 13px; padding-left: 20px; font-size: 12px; line-height: 26px; flex: 1; }
.winctl { display: flex; margin-right: 4px; height: 19px; border: 1px solid #505050; border-top: 0; color: #8f8f8f; }
.winctl button { width: 27px; }
.winctl button + button { border-left: 1px solid #505050; }
.winctl .wide { width: 47px; }

.options { display: flex; height: 35px; flex: none; align-items: center; background: #3b3b3b; border-bottom: 1px solid #262626; padding: 2px 9px 0 0; color: #a4a4a4; }
.sep { width: 1px; height: 24px; background: #2b2b2b; flex: none; }
.opt { height: 28px; flex: none; }
.home { width: 53px; padding-left: 2px; }
.tool { width: 49px; gap: 7px; }
.w36 { width: 36px; }
.w42 { width: 42px; }
.dim { color: #707070; }
.lab { padding: 0 6px 0 12px; }
.lab.first { padding: 0 4px 0 10px; }
.sel { position: relative; display: flex; align-items: center; height: 20px; background: #323232; border: 1px solid #4c4c4c; color: #b8b8b8; }
.sel select { padding-left: 7px; }
.sel > svg { position: absolute; right: 2px; color: #999; pointer-events: none; }
.size { width: 230px; border-color: #2b4a70; }
.num { width: 69px; height: 17px; padding-left: 4px; background: #323232; border: 1px solid #4c4c4c; }
.colorchip { width: 15px; height: 15px; margin: 0 5px 0 10px; background: #b4b4b4; flex: none; }
.bg { width: 82px; margin-right: 9px; }
.optright { display: flex; gap: 9px; margin-left: auto; align-items: center; }
.find { margin-right: 5px; }

.workspace { flex: 1; min-height: 0; display: flex; background: #262626; }
.colhead { height: 12px; flex: none; display: flex; align-items: center; padding: 0 5px; background: #2e2e2e; border-bottom: 1px solid #242424; color: #999; }
.colhead.end { justify-content: flex-end; }
.grip { display: block; height: 5px; width: 19px; background: repeating-linear-gradient(90deg, #2d2d2d 0 1px, #414141 1px 2px); }
.toolbar { width: 41px; flex: none; background: #3b3b3b; overflow: hidden; border-right: 1px solid #262626; display: flex; flex-direction: column; color: #a6a6a6; }
.griprow { height: 16px; flex: none; padding: 3px 0 0 10px; }
.tools { display: flex; flex-direction: column; flex: none; padding: 0 4px; }
.tools button { width: 32px; height: 26px; position: relative; }
.tools svg, .dgroup svg { width: 20px; height: 20px; }
.tools .on { background: #272727; border: 1px solid #4a4a4a; }
.more::after { content: ""; position: absolute; right: 3px; bottom: 4px; border: 2px solid transparent; border-right-color: #8a8a8a; border-bottom-color: #8a8a8a; }

.doc { flex: 1; min-width: 0; display: flex; flex-direction: column; position: relative; margin-right: 2px; background: #1e1e1e; }
.doctabs { height: 29px; flex: none; display: flex; background: #2f2f2f; border-bottom: 1px solid #292929; }
.doctab { display: flex; align-items: center; gap: 10px; padding: 2px 10px 0; background: #3a3a3a; border-right: 1px solid #242424; font-size: 11px; font-weight: 600; color: #b8b8b8; white-space: nowrap; }
.doctab button { color: #8a8a8a; }
.canvasrow { flex: 1; min-height: 0; display: flex; }
.canvas { flex: 1; position: relative; overflow: hidden; }
.abname { position: absolute; left: 278px; top: 65px; font: 700 11px/14px "DejaVu Sans Condensed", "DejaVu Sans", sans-serif; color: #929292; }
.artboard { position: absolute; left: 272px; top: 80px; }
.add { position: absolute; width: 22px; height: 22px; color: #a4a4a4; }
.add.top { left: 437px; top: 28px; }
.add.right { left: 654px; top: 302px; }
.add.bottom { left: 437px; top: 576px; }
.add.left { left: 220px; top: 302px; stroke-width: 2px; }
.callout { position: absolute; left: 249px; top: 17px; pointer-events: none; }
.vscroll { width: 16px; flex: none; background: #303030; border-left: 1px solid #262626; display: flex; flex-direction: column; align-items: center; padding: 5px 1px; color: #6e6e6e; }
.vtrack { flex: 1; width: 12px; padding-top: 172px; }
.vtrack i { display: block; height: 41%; min-height: 241px; background: #474747; }
.status { height: 17px; flex: none; display: flex; align-items: center; background: #363636; border-top: 1px solid #2a2a2a; color: #a4a4a4; }
.zoomv { width: 49px; padding-left: 7px; }
.docsize { width: 171px; padding-left: 40px; }
.hscroll { flex: 1; display: flex; align-items: center; padding: 0 21px 0 8px; margin-left: 2px; background: #303030; color: #6e6e6e; height: 16px; }
.htrack { flex: 1; padding-left: 27%; }
.htrack i { display: block; width: 62%; height: 12px; background: #494949; }

.dock { width: 38px; flex: none; background: #3b3b3b; color: #a4a4a4; margin-right: 2px; }
.dgroup { border-bottom: 1px solid #242424; }
.dgroup .grip { margin: 0 auto; height: 10px; border: solid #3b3b3b; border-width: 3px 0 2px; }
.dgroup button { display: flex; height: 29px; width: 100%; padding-left: 3px; }

.panels { width: 372px; flex: none; display: flex; flex-direction: column; background: #262626; }
.panel { background: #3a3a3a; margin-bottom: 2px; }
.tabs { display: flex; height: 28px; background: #2f2f2f; }
.tabs button { padding: 0 10px; border-right: 1px solid #272727; border-bottom: 1px solid #272727; color: #888; }
.tabs .on { background: #3a3a3a; border-bottom-color: #3a3a3a; color: #c4c4c4; font-weight: 600; }
.tabs .pmenu { margin-left: auto; padding: 0 6px; border-right: 0; color: #909090; flex: 1; justify-content: flex-end; }
.colorbody { display: flex; padding: 7px 17px 21px 10px; }
.cs { width: 36px; overflow: visible; }
.field { flex: 1; height: 146px; position: relative; background: linear-gradient(to top, #000, transparent), linear-gradient(to right, #b4b4b4, #1e00b4); }
.field i { position: absolute; left: 76%; top: 6px; width: 11px; height: 11px; border: 1px solid #ddd; border-radius: 50%; }
.hue { width: 19px; height: 146px; background: linear-gradient(#b40000, #b400b4 17%, #0000b4 33%, #00b4b4 50%, #00b400 67%, #b4b400 83%, #b40000); }
.libtop { padding: 8px 9px 2px; border-bottom: 1px solid #303030; font-size: 11px; }
.libsearch { display: flex; align-items: center; height: 20px; border-bottom: 1px solid #4a4a4a; padding-right: 3px; color: #aaa; }
.libsearch input { flex: 1; padding-left: 5px; font-style: italic; }
.libsearch input::placeholder { color: #5e5e5e; opacity: 1; }
.lib { height: 19px; margin-top: 8px; border-color: #484848; background: #343434; }
.lib select { padding-left: 10px; }
.lib > svg { right: 4px; }
.viewrow { display: flex; align-items: center; height: 26px; margin-top: 4px; gap: 4px; padding-right: 2px; }
.vbt { margin-right: auto; gap: 6px; color: #b8b8b8; }
.grid { width: 18px; height: 18px; color: #aaa; }
.grid.on { background: #242424; }
.patterns { display: flex; height: 55px; padding-left: 9px; background: #363636; }
.plist { flex: 1; padding-top: 8px; overflow: hidden; }
.ptitle { display: flex; align-items: center; gap: 3px; font-size: 11px; height: 16px; color: #8c8c8c; margin-bottom: 3px; }
.thumb { margin-left: 1px; }
.pscroll { width: 17px; display: flex; flex-direction: column; justify-content: space-between; align-items: center; padding: 5px 2px; color: #888; }
.pscroll i { width: 12px; height: 16px; background: #505050; }
.libfoot { display: flex; align-items: center; height: 25px; gap: 9px; padding: 0 20px 0 10px; border-top: 1px solid #303030; color: #a0a0a0; }
.mb { margin-left: auto; font-weight: 600; color: #b8b8b8; }
.layers { flex: 1; min-height: 0; display: flex; flex-direction: column; margin-bottom: 0; }
.layers .tabs { flex: none; }
.lrow { display: flex; align-items: center; flex: none; padding-left: 4px; border-bottom: 1px solid #2c2c2c; color: #a4a4a4; }
.filter { height: 33px; gap: 4px; padding-top: 6px; }
.filter button { width: 20px; height: 20px; }
.filter .toggle { padding-bottom: 2px; width: 18px; }
.kind { width: 88px; margin-right: 3px; }
.kind select { padding-left: 21px; }
.kind .lead { left: 8px; color: #bbb; }
.blend { height: 28px; }
.mode { width: 130px; height: 20px; margin-right: 6px; }
.blend label { width: 38px; }
.pct { display: flex; width: 51px; height: 16px; background: #323232; border: 1px solid #484848; color: #b8b8b8; margin-left: 3px; }
.pct input { width: 34px; text-align: center; }
.pct button { flex: 1; border-left: 1px solid #484848; color: #999; }
.lock { height: 29px; gap: 2px; border-bottom: 0; padding-left: 6px; }
.lk { width: 27px; }
.lock > button { width: 20px; height: 20px; }
.lock label { margin-left: 16px; width: 16px; }
.off { color: #5a5a5a; background: none; }
.pct.off input, .pct.off button { color: #505050; }
.lock .pct { border-color: #454545; margin-left: 1px; }
.llist { flex: 1; min-height: 0; background: #363636; padding-right: 17px; }
.layer { display: flex; height: 27px; border-bottom: 1px solid #2c2c2c; background: #3a3a3a; font-size: 11px; }
.layer.tall { height: 41px; font-size: 10px; }
.eye { width: 31px; border-right: 1px solid #2c2c2c; color: #b0b0b0; padding-left: 2px; }
.sel-on .eye { background: #303030; }
.lbody { flex: 1; display: flex; align-items: center; gap: 8px; padding-left: 2px; }
.sel-on .lbody { background: #4c4c4c; color: #bcbcbc; }
.tall .lbody { padding-left: 20px; }
.lthumb { width: 25px; height: 31px; border: 1px solid #1a1a1a; background: repeating-conic-gradient(#8c8c8c 0 25%, #b4b4b4 0 50%) 0 0 / 8px 8px; }
.lfoot { height: 26px; flex: none; display: flex; align-items: center; justify-content: flex-end; gap: 7px; padding-right: 25px; border-top: 1px solid #2c2c2c; color: #a0a0a0; }
.lfoot button { width: 20px; height: 20px; }
.fx { font: italic 13px/16px "Open Sans", sans-serif; }
.lfoot .dim { color: #707070; }

.taskbar { height: 40px; flex: none; display: flex; background: #130f10; color: #bcbcbc; }
.start { width: 48px; }
.tsearch { width: 344px; display: flex; align-items: center; padding: 0 14px 0 9px; background: #a9a9a9; color: #222; }
.tsearch input { flex: 1; padding-left: 9px; font-size: 14px; }
.tsearch input::placeholder { color: #2a2a2a; opacity: 1; }
.app { width: 48px; margin-right: 3px; border-bottom: 2px solid transparent; }
.run { width: 40px; margin: 0 5px 0 4px; border-bottom-color: #5d8db0; }
.cur { width: 48px; margin: 0; background: #2f2f2f; }
.tray { margin-left: auto; display: flex; align-items: center; gap: 8px; padding-right: 24px; }
.tray .gap { margin-left: 12px; }
.lang, .clock { display: flex; flex-direction: column; align-items: center; font-size: 12px; line-height: 18px; }
.clock { margin: 0 8px 0 1px; }
```
